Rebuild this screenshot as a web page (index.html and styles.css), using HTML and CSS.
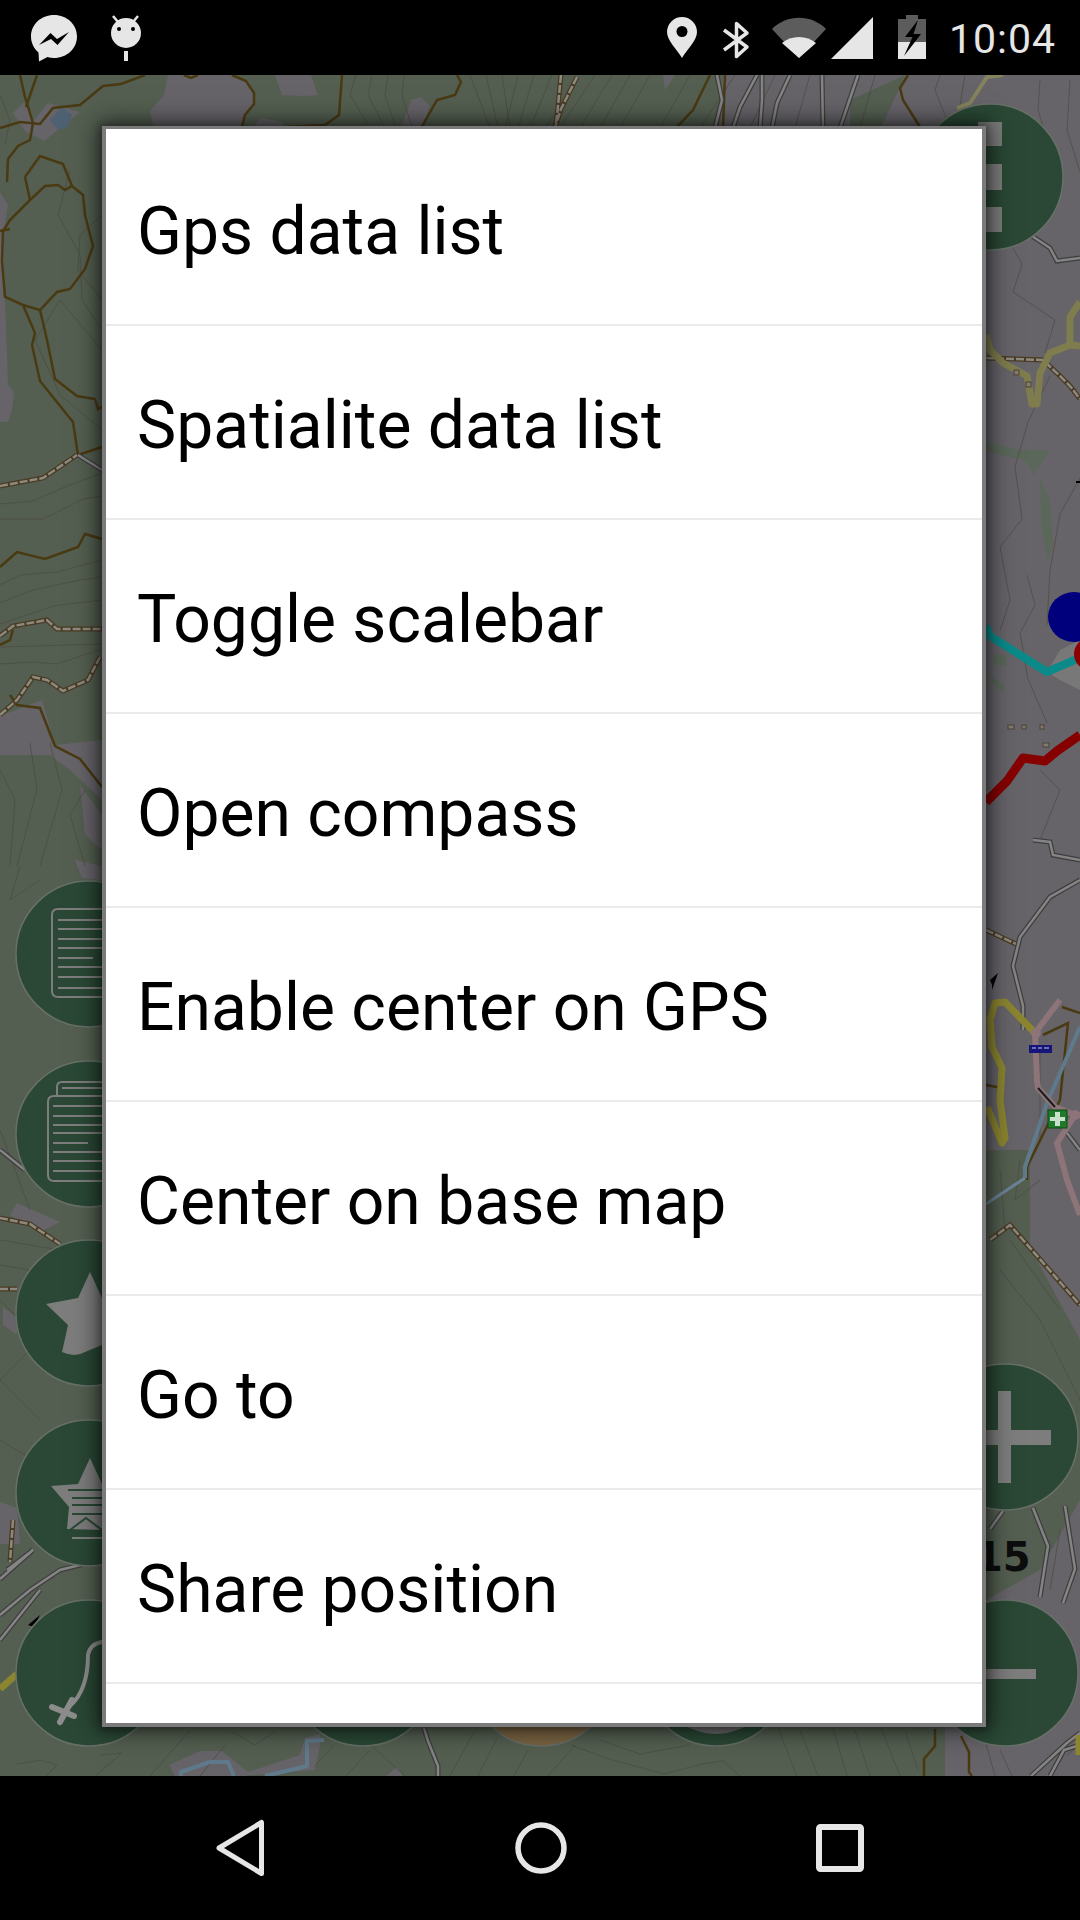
FILE: index.html
```html
<!DOCTYPE html>
<html lang="en">
<head>
  <meta charset="UTF-8" />
  <meta name="viewport" content="width=device-width, initial-scale=1.0" />
  <title>Map menu</title>
  <link rel="stylesheet" href="styles.css">
</head>
<body>

  <div class="statusbar">
    <div class="status-left">
      <svg class="ico-messenger" viewBox="0 0 60 60" width="60" height="60">
        <path class="fill-light" d="M30 7C17 7 7 16.500 7 28.500C7 35 10 40.500 14.500 44.500L15 53.500L23.500 49C25.500 49.600 27.700 50 30 50C43 50 53 40.500 53 28.500C53 16.500 43 7 30 7Z"/>
        <path class="fill-black" d="M15 37L26.500 25L33 31L45 24L33.500 37L27 31Z"/>
      </svg>
      <svg class="ico-debug" viewBox="0 0 40 62" width="40" height="62">
        <path class="stroke-light" stroke-width="2.500" d="M7 16L12 22M32 16L27 22"/>
        <circle class="fill-light" cx="20" cy="33" r="15"/>
        <circle class="fill-black" cx="13" cy="29" r="2"/>
        <circle class="fill-black" cx="27" cy="29" r="2"/>
        <rect class="fill-light" x="18" y="51" width="4" height="10"/>
      </svg>
    </div>
    <div class="status-right">
      <svg class="ico-pin" viewBox="0 0 32 44" width="32" height="44">
        <path class="fill-light" d="M16 42C11 33 1 25 1 16A15 15 0 0 1 31 16C31 25 21 33 16 42Z"/>
        <circle class="fill-black" cx="16" cy="15.500" r="5.500"/>
      </svg>
      <svg class="ico-bt" viewBox="0 0 28 38" width="28" height="38">
        <path class="stroke-light" stroke-width="3.500" d="M2 9L25 26L14.500 35.500V2.500L25 12L2 29"/>
      </svg>
      <svg class="ico-wifi" viewBox="0 0 54 44" width="54" height="44">
        <path class="fill-dim" d="M0 13C15 -2 39 -2 54 13L27 42Z"/>
        <path class="fill-light" d="M10 27C19 19 35 19 44 27L27 42Z"/>
      </svg>
      <svg class="ico-signal" viewBox="0 0 44 44" width="44" height="44">
        <path class="fill-light" d="M1 43L43 1V43Z"/>
      </svg>
      <svg class="ico-battery" viewBox="0 0 30 46" width="30" height="46">
        <path class="fill-dim" d="M9 1H21V5H29V28H1V5H9Z"/>
        <rect class="fill-light" x="1" y="28" width="28" height="17"/>
        <path class="fill-black" d="M21 6L8 23H15.500L7 42L24 20H16.500Z"/>
      </svg>
      <span class="clock">10:04</span>
    </div>
  </div>

  <div class="screen">
    <svg class="map" viewBox="0 75 1080 1701" width="1080" height="1701">
      <!-- land use -->
      <rect class="land-grey" x="0" y="75" width="1080" height="1701"/>
      <path class="land-green" d="M0 75H723L720 130H850L850 100L905 75L880 130H986V1150H1030V1247L1080 1340V1500L1040 1570L986 1600L945 1727V1776H0Z"/>
      <path class="land-grey" d="M13 113L24 102L34 120L48 103L80 112L44 141L25 131Z"/>
      <path class="land-grey" d="M168 75H232L246 81L254 93L254 104L245 115L241 130H154L150 111L164 95Z"/>
      <path class="land-grey" d="M275 75H311L318 95L304 96L282 95ZM261 118L282 122L286 130H250Z"/>
      <path class="land-grey" d="M400 130L411 100L421 97L430 106L421 130ZM663 75H675L665 90Z"/>
      <path class="land-grey" d="M0 192L8 205L3 235L5 300L8 385L14 392L12 410L8 422L0 422Z"/>
      <path class="land-grey" d="M0 716L42 700L55 745L102 740V800L70 770L50 755H0ZM80 785L102 815V850L85 835Z"/>
      <path class="land-grey" d="M75 860L102 866V880L82 878ZM17 1203L60 1222L40 1232L10 1215ZM3 1307L17 1318V1335L3 1325ZM0 1502L17 1508L20 1544H0Z"/>
      <path class="land-grey" d="M169 1765L200 1751L222 1751L248 1772L300 1755L305 1738L320 1734V1745L315 1770L240 1776H175ZM386 1776L397 1767L403 1776Z"/>
      <path class="lake" d="M50 120L62 107L72 115L68 127L58 130Z"/>
      <path class="patch" d="M987 442L1020 450L1050 450L1034 475L1025 460L987 452Z"/>
      <path class="patch" d="M1040 480L1050 500L1053 545L1048 560L1042 530Z"/>
      <path class="patch" d="M990 655L1005 655L1007 665L995 665ZM990 675L1005 685L1003 692L990 682Z"/>

      <!-- contour lines -->
      <g class="contour">
        <path d="M0 95L10 120L5 145M70 170L58 215L80 255L82 300L102 330"/>
        <path d="M102 215L80 235L78 270L102 300M102 350L60 300L35 340L60 395L102 430"/>
        <path d="M0 504L33 501L67 486L102 473M0 519H43L83 499L102 496"/>
        <path d="M0 585L20 575L57 572L102 560M0 603L33 590L80 580L102 577M0 624L53 606L102 600M0 647L102 644M0 664L33 662L57 664L102 649"/>
        <path d="M30 743L37 789L17 866M50 743L62 790L40 866M85 790L70 815L85 866M0 770L15 800L10 866"/>
        <path d="M20 866L10 900L40 880M0 1130L30 1210M0 1240L60 1250M0 1265L60 1275M0 1300L40 1340L0 1380L40 1420M0 1440L50 1470"/>
        <path d="M17 1764L41 1760L57 1765L46 1776M100 1755L122 1753L95 1776M231 1731L255 1745L276 1731M200 1776L225 1745M150 1776L190 1730"/>
        <path d="M334 1745L314 1767M346 1776L370 1750M405 1776L360 1735M497 1738L478 1776M528 1750L514 1776M450 1776L475 1730"/>
        <path d="M548 1776L575 1745M571 1745L609 1759L664 1774L702 1764L723 1761L740 1776M600 1740L640 1754L690 1745"/>
        <path d="M778 1728L797 1776M800 1730L818 1776M833 1728L847 1776M855 1730L870 1776M881 1728L900 1776M905 1730L918 1770"/>
        <path d="M356 75L350 95L370 128M372 75L368 95L385 128M388 75L385 95L396 128M404 75L402 95L412 128"/>
        <path d="M470 75L490 128M486 75L498 128M502 75L510 128M518 75L505 128M534 75L518 128"/>
        <path d="M552 75L530 128M575 85L545 128M595 75L560 128M612 75L580 128M630 75L600 128M650 75L620 128"/>
        <path d="M690 75L660 128M735 75L700 128M775 75L750 128M810 75L795 128M875 75L860 128M940 75L935 90L950 128M965 75L960 105"/>
        <path d="M1040 80L1038 110L1050 150M1070 80L1067 130L1080 172M1013 248L1022 264L1013 292L1055 320L1045 353"/>
        <path d="M1000 547L1022 519L1015 467L1028 422L1050 376M1000 547L1010 600L1000 631M1027 575L1035 605L1020 633L1028 679L1047 723"/>
        <path d="M1060 514L1050 570L1047 625M1080 478L1060 514M1040 770L1060 790L1040 840"/>
        <path d="M1000 1270L1040 1320L1080 1400M1010 1240L1060 1310M1080 1450L1040 1410M1060 1530L1050 1590"/>
        <path d="M1040 1050V1140M1000 1170L1005 1230M1020 1160L1015 1200L1040 1180"/>
        <path d="M1067 1755L1080 1745M1000 1750L1012 1776M985 1740L995 1776"/>
      </g>

      <!-- trails -->
      <g class="trail">
        <path d="M20 75L25 97L33 123L30 140L18 146L8 159L7 182"/>
        <path d="M37 75L26 107"/>
        <path d="M0 128L20 122L40 124L53 108L80 105L103 86L121 84L145 75"/>
        <path d="M184 75L191 78L198 75"/>
        <path d="M3 231L10 220L30 200L45 186L58 185L65 190L72 186L83 195L85 215L93 246L85 269L70 289L57 292L40 310L23 305L5 297L2 261Z"/>
        <path d="M0 231L10 229M25 177L40 156L63 164L72 186M25 177L30 200"/>
        <path d="M40 310L47 340L55 379L77 396L95 399L98 409L102 407"/>
        <path d="M23 305L35 333L32 345L40 381L73 422L78 455L102 447"/>
        <path d="M0 567L17 552L45 559L78 547L85 534L102 539"/>
        <path d="M0 645L10 640L13 630M10 695L17 705L40 708L55 746L80 759L102 787"/>
        <path d="M232 75L246 81L254 93L254 104L245 115L241 130"/>
        <path d="M286 127L325 125L339 115L342 75"/>
        <path d="M420 130L437 100L455 95L461 82L457 75"/>
        <path d="M710 75L693 110L677 127M725 75L723 127M908 75L900 88L903 100L920 127"/>
        <path d="M1027 1180V1167L1060 1100L1068 1023L1043 1035M1080 1013L1062 1007"/>
        <path d="M986 1085L1002 1088"/>
        <path d="M935 1729V1746L924 1759L924 1776M961 1736L969 1752V1772L972 1776"/>
      </g>

      <!-- tracks -->
      <g class="track-casing">
        <path d="M0 486L43 478L77 455M0 636L13 626L47 620L57 629L102 629M0 715L17 700L33 677L47 680L63 691L88 680L100 657"/>
        <path d="M0 1218L30 1224L60 1244M0 1289H17M13 1520L10 1562"/>
        <path d="M986 358L1043 360L1060 376L1070 386L1080 399M986 930L1018 945M990 1240L1010 1225L1080 1305"/>
        <path d="M561 75L557 116L555 128M577 77L561 109L555 128"/>
      </g>
      <g class="track-dash">
        <path d="M0 486L43 478L77 455M0 636L13 626L47 620L57 629L102 629M0 715L17 700L33 677L47 680L63 691L88 680L100 657"/>
        <path d="M0 1218L30 1224L60 1244M0 1289H17M13 1520L10 1562"/>
        <path d="M986 358L1043 360L1060 376L1070 386L1080 399M986 930L1018 945M990 1240L1010 1225L1080 1305"/>
        <path d="M561 75L557 116L555 128M577 77L561 109L555 128"/>
      </g>

      <!-- double line roads -->
      <g class="road-casing">
        <path d="M717 75L722 100L715 128M757 75L740 107L733 128M762 75V100L760 128M790 75L777 103L772 128M822 75L823 128M858 75L840 128"/>
        <path d="M78 455L102 470M0 1150L25 1170"/>
        <path d="M0 1579L33 1550L7 1570M0 1615L30 1590L60 1570L100 1560M0 1640L40 1590"/>
        <path d="M1032 236L1050 248L1057 261L1080 258M1033 840L1050 842L1053 855L1080 860"/>
        <path d="M1080 880L1050 897L1020 937L1013 966L1023 1006V1030"/>
        <path d="M1080 1150L1067 1133M1003 1511L990 1529M1033 1508L1048 1546L1040 1597M1065 1506L1075 1569L1063 1603"/>
        <path d="M1031 1776L1067 1743L1080 1733M1050 1776L1064 1750L1080 1745"/>
        <path d="M424 1728L428 1741L438 1766V1776"/>
      </g>
      <g class="road-fill">
        <path d="M717 75L722 100L715 128M757 75L740 107L733 128M762 75V100L760 128M790 75L777 103L772 128M822 75L823 128M858 75L840 128"/>
        <path d="M78 455L102 470M0 1150L25 1170"/>
        <path d="M0 1579L33 1550L7 1570M0 1615L30 1590L60 1570L100 1560M0 1640L40 1590"/>
        <path d="M1032 236L1050 248L1057 261L1080 258M1033 840L1050 842L1053 855L1080 860"/>
        <path d="M1080 880L1050 897L1020 937L1013 966L1023 1006V1030"/>
        <path d="M1080 1150L1067 1133M1003 1511L990 1529M1033 1508L1048 1546L1040 1597M1065 1506L1075 1569L1063 1603"/>
        <path d="M1031 1776L1067 1743L1080 1733M1050 1776L1064 1750L1080 1745"/>
        <path d="M424 1728L428 1741L438 1766V1776"/>
      </g>

      <!-- coloured roads -->
      <path class="line olive" d="M986 335L990 350L1003 363L1027 376L1032 404H1037L1040 373L1050 353L1070 345V317L1080 302M1070 345L1080 346"/>
      <path class="line olive-thin" d="M1003 75L987 77L970 103L957 108"/>
      <path class="line river" d="M1025 1178V1167L1047 1103L1080 1027"/>
      <path class="line river-bright" d="M986 1204L1025 1178"/>
      <path class="line river" d="M181 1776V1772L210 1762H228L234 1776M265 1776L307 1766V1741L324 1740"/>
      <path class="line yellow" d="M1035 1033L1005 1002L995 1003L990 1020L992 1047L1002 1068L1000 1100L1005 1138L1002 1143L987 1107"/>
      <path class="line pink" d="M1060 1000L1035 1033L1037 1080L1038 1088L1055 1107L1075 1115L1080 1115M1075 1115L1057 1143L1067 1180L1080 1215"/>
      <circle class="pink-node" cx="1036" cy="1033" r="5"/>
      <circle class="pink-node" cx="1075" cy="1115" r="5"/>
      <path class="line road-dark" d="M1038 1088L1055 1107"/>
      <path class="line yellow" d="M0 1689L17 1674M1079 1735V1755"/>

      <!-- overlay routes -->
      <path class="gps-shade" d="M1060 650L1080 640V690L1060 680L1047 672Z"/>
      <path class="line teal" d="M986 626L990 636L1047 672L1077 659"/>
      <path class="line red" d="M986 802L1007 781L1023 758L1045 761L1057 751L1080 735"/>
      <circle class="gps-red" cx="1090" cy="654" r="16"/>
      <ellipse class="gps-blue" cx="1074" cy="617" rx="26" ry="25"/>

      <!-- small map symbols -->
      <rect class="house" x="1008" y="725" width="6" height="4"/>
      <rect class="house" x="1022" y="725" width="4" height="4"/>
      <rect class="house" x="1040" y="725" width="4" height="4"/>
      <rect class="house" x="1043" y="743" width="6" height="4"/>
      <rect class="house" x="1014" y="370" width="5" height="5"/>
      <rect class="house" x="1026" y="382" width="5" height="5"/>
      <path class="fill-black" d="M1080 481H1076V483H1080ZM992 985L990 980L998 973L992 990Z"/>
      <path class="fill-black" d="M28 1625L40 1615L34 1627Z"/>
      <rect class="bus" x="1029" y="1045" width="23" height="8"/>
      <path class="bus-windows" d="M1032 1048H1036M1038 1048H1042M1044 1048H1049"/>
      <rect class="cross-box" x="1048" y="1110" width="19" height="18"/>
      <path class="cross" d="M1055 1112H1060V1117H1065V1121H1060V1126H1055V1121H1050V1117H1055Z"/>

      <!-- floating buttons -->
      <circle class="fab" cx="89" cy="954" r="73"/>
      <g class="fab-lines">
        <path d="M58 920H102M58 929H102M58 939H102M58 948H102M58 958H93M58 967H102M58 977H102M58 988H102"/>
        <path d="M102 909H58Q52 909 52 915V991Q52 997 58 997H102"/>
      </g>
      <circle class="fab" cx="89" cy="1134" r="73"/>
      <g class="fab-lines">
        <path d="M102 1082H62Q57 1082 57 1087V1096M102 1088H62"/>
        <path d="M102 1096H54Q48 1096 48 1102V1175Q48 1181 54 1181H102"/>
        <path d="M53 1106H102M53 1116H102M53 1125H102M53 1133H102M53 1143H88M53 1152H102M53 1161H102M53 1171H102"/>
      </g>
      <circle class="fab" cx="89" cy="1313" r="73"/>
      <path class="fab-glyph" d="M90 1272L102 1298V1345L85 1352Q75 1358 62 1352L68 1325L46 1304L78 1298Z"/>
      <circle class="fab" cx="89" cy="1493" r="73"/>
      <path class="fab-glyph" d="M90 1458L102 1484V1530L67 1529L69 1507L51 1486L78 1484Z"/>
      <path class="fab-cut" d="M68 1490H102M72 1498H102M72 1505H102M72 1514H102M70 1530L86 1518L102 1530"/>
      <path class="fab-lines-one" d="M72 1538H102"/>
      <circle class="fab" cx="89" cy="1673" r="73"/>
      <path class="fab-route" d="M102 1642Q90 1644 88 1655Q88 1690 70 1706"/>
      <path class="fab-route thick" d="M52 1707L74 1716M60 1722L72 1700"/>
      <circle class="fab" cx="990" cy="177" r="73"/>
      <path class="fab-glyph" d="M978 122H1002V146H978ZM978 164H1002V190H978ZM978 207H1002V232H978Z"/>
      <circle class="fab" cx="1005" cy="1437" r="73"/>
      <path class="fab-glyph" d="M998 1391H1011V1430H1051V1445H1011V1483H998V1445H978V1430H998Z"/>
      <circle class="fab" cx="1005" cy="1673" r="73"/>
      <rect class="fab-glyph" x="978" y="1669" width="58" height="10"/>
      <circle class="fab" cx="363" cy="1673" r="73"/>
      <circle class="fab fab-orange" cx="541" cy="1673" r="73"/>
      <circle class="fab" cx="716" cy="1673" r="73"/>
      <circle class="fab-hole" cx="716" cy="1673" r="61"/>
    </svg>

    <div class="zoom-level">15</div>

    <div class="dialog">
      <ul class="menu">
        <li>Gps data list</li>
        <li>Spatialite data list</li>
        <li>Toggle scalebar</li>
        <li>Open compass</li>
        <li>Enable center on GPS</li>
        <li>Center on base map</li>
        <li>Go to</li>
        <li>Share position</li>
      </ul>
    </div>
  </div>

  <div class="navbar">
    <svg viewBox="0 0 60 64" width="60" height="64">
      <path class="stroke-light" stroke-width="5" d="M49.500 6.500V57.500L7 32Z"/>
    </svg>
    <svg viewBox="0 0 60 64" width="60" height="64">
      <circle class="stroke-light" stroke-width="5.500" cx="30" cy="32" r="23"/>
    </svg>
    <svg viewBox="0 0 60 64" width="60" height="64">
      <rect class="stroke-light" stroke-width="6" x="9" y="11" width="42" height="42" rx="1.500"/>
    </svg>
  </div>

</body>
</html>
```

FILE: styles.css
```css
body {
  margin: 0;
  width: 1080px;
  height: 1920px;
  overflow: hidden;
  background: #000;
  font-family: 'Roboto', sans-serif;
}

/* status bar */
.statusbar {
  height: 75px;
  display: flex;
  justify-content: space-between;
  align-items: flex-start;
  background: #000;
}
.status-left {
  display: flex;
  align-items: flex-start;
  padding-left: 24px;
}
.ico-messenger {
  margin-top: 8px;
}
.ico-debug {
  margin-left: 22px;
}
.status-right {
  display: flex;
  align-items: flex-start;
}
.ico-pin {
  margin-top: 16px;
}
.ico-bt {
  margin: 21px 0 0 24px;
}
.ico-wifi {
  margin: 16px 0 0 22px;
}
.ico-signal {
  margin: 16px 0 0 4px;
}
.ico-battery {
  margin: 14px 0 0 23px;
}
.clock {
  margin: 15px 24px 0 22px;
  font-size: 41px;
  line-height: 48px;
  letter-spacing: 1px;
  color: #e6e6e6;
}
.fill-light {
  fill: #e6e6e6;
}
.fill-dim {
  fill: #5c5c5c;
}
.fill-black {
  fill: #000;
}
.stroke-light {
  fill: none;
  stroke: #e6e6e6;
  stroke-linejoin: round;
}

/* map */
.screen {
  position: relative;
  height: 1701px;
  overflow: hidden;
}
.map {
  display: block;
}
.land-grey {
  fill: #666469;
}
.land-green {
  fill: #545f51;
}
.lake {
  fill: #4e6172;
}
.patch {
  fill: #5b675a;
}
.contour path {
  fill: none;
  stroke: #4b4a40;
  stroke-width: 1;
  opacity: 0.7;
}
.trail path {
  fill: none;
  stroke: #4a3a12;
  stroke-width: 2.500;
}
.track-casing path {
  fill: none;
  stroke: #4a3a22;
  stroke-width: 5;
}
.track-dash path {
  fill: none;
  stroke: #8c897f;
  stroke-width: 2.500;
  stroke-dasharray: 8 2;
}
.road-casing path {
  fill: none;
  stroke: #3e3e3e;
  stroke-width: 5;
}
.road-fill path {
  fill: none;
  stroke: #848484;
  stroke-width: 2.500;
}
.line {
  fill: none;
  stroke-linejoin: round;
}
.olive {
  stroke: #7f7d4d;
  stroke-width: 7;
}
.olive-thin {
  stroke: #85835c;
  stroke-width: 4;
}
.yellow {
  stroke: #8b8530;
  stroke-width: 7;
}
.pink {
  stroke: #8d7478;
  stroke-width: 6;
}
.pink-node {
  fill: #8d7478;
}
.road-dark {
  stroke: #1c1c1c;
  stroke-width: 2;
}
.river {
  stroke: #5f7a8c;
  stroke-width: 4;
}
.river-bright {
  stroke: #6b8496;
  stroke-width: 3;
}
.teal {
  stroke: #0b8a8a;
  stroke-width: 8;
}
.red {
  stroke: #860000;
  stroke-width: 9;
}
.gps-shade {
  fill: #787878;
}
.gps-red {
  fill: #8e0000;
}
.gps-blue {
  fill: #00007d;
}
.house {
  fill: #85796b;
  stroke: #4a4238;
}
.bus {
  fill: #16167a;
}
.bus-windows {
  stroke: #6f6fb0;
  stroke-width: 2;
}
.cross-box {
  fill: #1f7a2a;
  stroke: #0e4a14;
}
.cross {
  fill: #c9e0ca;
}

/* floating buttons on the map */
.fab {
  fill: #2a4835;
  stroke: #687068;
  stroke-width: 1.500;
}
.fab-orange {
  fill: #7a6442;
}
.fab-hole {
  fill: #6b6a6c;
}
.fab-glyph {
  fill: #7d7d7d;
}
.fab-lines path,
.fab-lines-one {
  fill: none;
  stroke: #7d7d7d;
  stroke-width: 2;
}
.fab-cut {
  fill: none;
  stroke: #2a4835;
  stroke-width: 2;
}
.fab-route {
  fill: none;
  stroke: #8c8c8c;
  stroke-width: 4;
  stroke-linecap: round;
}
.fab-route.thick {
  stroke-width: 6;
}
.zoom-level {
  position: absolute;
  left: 975px;
  top: 1458px;
  font-family: 'DejaVu Sans', sans-serif;
  font-size: 40px;
  font-weight: bold;
  line-height: 48px;
  color: #0d0d0d;
}

/* menu dialog */
.dialog {
  position: absolute;
  left: 102px;
  top: 51px;
  width: 884px;
  height: 1601px;
  box-sizing: border-box;
  border: 3px solid #7b7b7b;
  border-width: 3px 4px 4px;
  overflow: hidden;
  background: #fff;
  box-shadow: 0 0 8px 2px rgba(0, 0, 0, 0.35), 0 0 24px 5px rgba(0, 0, 0, 0.5);
}
.menu {
  list-style: none;
  margin: 0;
  padding: 3px 0 0;
}
.menu li {
  height: 192px;
  padding-left: 31px;
  border-bottom: 2px solid #ebebeb;
  font-size: 66px;
  line-height: 200px;
  color: #000;
}

/* nav bar */
.navbar {
  height: 144px;
  box-sizing: border-box;
  padding: 40px 210px 0 212px;
  display: flex;
  justify-content: space-between;
  align-items: flex-start;
  background: #000;
}
```
